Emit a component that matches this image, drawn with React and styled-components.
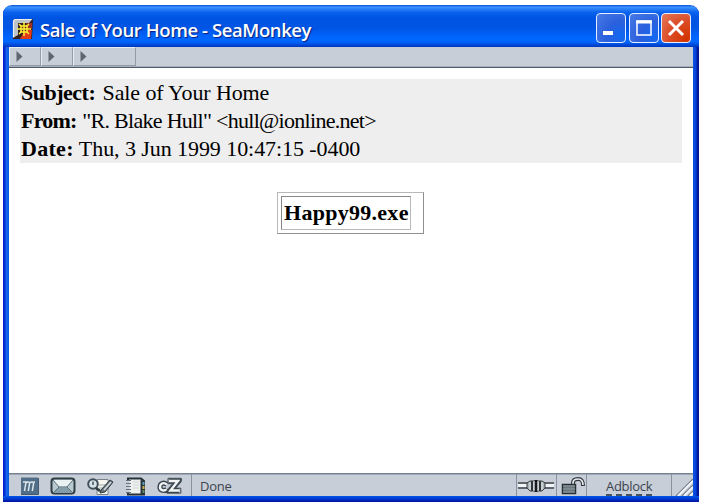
import React from "react";
import styled, { createGlobalStyle } from "styled-components";

const GlobalStyle = createGlobalStyle`
  * { box-sizing: border-box; }
  body { margin: 0; background: #fff; overflow: hidden; }
`;

const Desktop = styled.main`
  width: 704px;
  height: 504px;
  padding: 5px 5px 2px 3px;
  background: #fff;
`;

const Window = styled.section`
  display: flex;
  flex-direction: column;
  width: 696px;
  height: 497px;
  padding: 0 6px 6px;
  border-radius: 9px 9px 0 0;
  overflow: hidden;
  background:
    linear-gradient(to bottom, #0054e8 0, #0038d0 50%, #00109c 100%) bottom / 100% 6px no-repeat,
    linear-gradient(to right, #0019cf 0, #0831d9 33%, #166aee 60%, #0855dd 100%) left / 6px 100% no-repeat,
    linear-gradient(to right, #0855dd 0, #0441d8 50%, #001ba0 70%, #00138c 100%) right / 6px 100% no-repeat;
`;

const TitleBar = styled.header`
  flex: none;
  display: flex;
  align-items: center;
  height: 42px;
  margin: 0 -6px;
  padding: 5px 8px 0 9px;
  background: linear-gradient(to bottom, #0b4fd0 0, #3c94ff 5%, #2b82f8 9%, #0962ee 18%, #0054e3 30%, #0055e5 55%, #0066ff 78%, #0065fc 88%, #0045d0 96%, #0035bb 100%);
`;

const Title = styled.h1`
  flex: 1;
  margin: 3px 0 0 6px;
  color: #fff;
  font: 600 18.5px/26px "Open Sans", sans-serif;
  letter-spacing: -0.41px;
  text-shadow: 1px 1px 1px #0b1f80;
  white-space: nowrap;
`;

const WindowButtons = styled.div`
  display: flex;
  gap: 2.5px;
  margin-bottom: 1px;
`;

const WindowButton = styled.button`
  display: grid;
  place-items: center;
  width: 30px;
  height: 30px;
  padding: 0;
  border: 1.5px solid #e6eeff;
  border-radius: 4px;
  background: ${(p) =>
    p.$close
      ? "radial-gradient(circle at 90% 90%, #d33400 0, #dc4b25 50%, #e57b5d 100%)"
      : "radial-gradient(circle at 85% 80%, #1268f2 0, #2b60dc 45%, #4a7be7 100%)"};
`;

const Toolbar = styled.nav`
  flex: none;
  display: flex;
  height: 21px;
  background: #c7ced8;
  border-bottom: 1px solid #4d5b6b;
  box-shadow: inset 0 -1px #a7afbb;
`;

const Grip = styled.button`
  display: flex;
  align-items: center;
  width: ${(p) => p.$width}px;
  height: 19px;
  padding: 0 0 1px 6px;
  border: solid;
  border-width: 1px;
  border-color: #e8edf3 #929ca9 #929ca9 #e8edf3;
  background: #c7ced8;
`;

const Content = styled.article`
  flex: 1;
  min-height: 0;
  padding: 11px 11px 0;
  background: #fff;
  color: #000;
  font-family: "Liberation Serif", serif;
`;

const Headers = styled.div`
  height: 84px;
  padding-left: 1px;
  background: #eee;
  font-size: 22px;
  line-height: 28px;
`;

const HeaderLine = styled.div`
  height: 28px;
  white-space: nowrap;
  letter-spacing: ${(p) => p.$spacing}px;
`;

const Label = styled.b`
  margin-right: ${(p) => p.$gap || 0}px;
  letter-spacing: ${(p) => p.$spacing}px;
`;

const Attachment = styled.div`
  width: 147px;
  height: 42px;
  margin: 29px 0 0 257px;
  padding: 3px;
  border: 1px solid;
  border-color: #b8b8b8 #909090 #909090 #b8b8b8;
`;

const AttachmentName = styled.div`
  width: 130px;
  height: 34px;
  padding-left: 2px;
  border: 1px solid;
  border-color: #888 #b8b8b8 #b8b8b8 #888;
  font-size: 22px;
  font-weight: bold;
  line-height: 31px;
  letter-spacing: 0.28px;
  white-space: nowrap;
`;

const StatusBar = styled.footer`
  flex: none;
  display: flex;
  height: 23px;
  background: #c7ced8;
  border-top: 1px solid #77818f;
  box-shadow: inset 0 1px #9ea7b4;
  color: #3c444e;
  font: 13px/25px "Open Sans", sans-serif;
`;

const StatusCell = styled.div`
  flex: ${(p) => (p.$width ? "none" : "1")};
  display: flex;
  align-items: center;
  width: ${(p) => (p.$width ? p.$width + "px" : "auto")};
  padding: 2px 0 0 ${(p) => p.$pad || 0}px;
  gap: ${(p) => p.$gap || 0}px;
  border-right: ${(p) => (p.$last ? "0" : "1px solid #8993a0")};
`;

const StatusText = styled.span`
  letter-spacing: -0.25px;
`;

const Adblock = styled.span`
  height: 20px;
  line-height: 20px;
  letter-spacing: -0.3px;
  border-bottom: 2px dashed #465260;
`;

const Svg = styled.svg`
  display: block;
  flex: none;
`;

const AppIcon = () => (
  <Svg width="22" height="22" viewBox="0 0 22 22">
    <path d="M2 3Q2 1 4 1H21L20 21H1Z" fill="#34201d" />
    <path d="M13 12H20L19 21H8Z" fill="#df3c17" />
    <path d="M14 5H20V11H15Z" fill="#9d3023" />
    <path d="M1 20V4Q1 1 4 1H20.5L17 5H6V17Z" fill="#bcc3c9" />
    <path d="M1.5 19V4Q1.5 1.5 4 1.5H19.5" fill="none" stroke="#f0efe9" strokeWidth="1.2" />
    <g fill="none" stroke="#ffee35" strokeWidth="1.5">
      <path d="M12 4V18M5 11H19M7 6L17 16M17 6L7 16" />
      <path d="M9 8H15V14H9Z" fill="#6b2c18" />
      <path d="M9 11H15M12 8V14" />
    </g>
  </Svg>
);

const Arrow = () => (
  <Svg width="7" height="11"><path d="M.5 0V11L6.5 5.5Z" fill="#5d6671" /></Svg>
);

const MinimizeIcon = () => <Svg width="26" height="26"><rect x="5" y="16" width="10" height="4" fill="#fff" /></Svg>;
const MaximizeIcon = () => (
  <Svg width="26" height="26"><path d="M6 6H20V20H6Z" fill="none" stroke="#fff" strokeWidth="1.5" /><path d="M5.3 7H20.7" stroke="#fff" strokeWidth="3" /></Svg>
);
const CloseIcon = () => (
  <Svg width="26" height="26"><path d="M6 6L20 20M20 6L6 20" stroke="#fff" strokeWidth="3" /></Svg>
);

const NavigatorIcon = () => (
  <Svg width="19" height="18">
    <rect x="1" y=".5" width="17" height="17" fill="#526f87" />
    <path d="M3 5H6L4.5 14M6 6C7 4.5 9.8 4.5 9.5 6.8L8.3 14M9.6 6C11 4.5 14 4.5 13.5 6.8L12.3 14M13.7 5H15" fill="none" stroke="#dce7ed" strokeWidth="1.5" />
    <path d="M1 17.5H18.5V1" fill="none" stroke="#405b72" />
  </Svg>
);

const MailIcon = () => (
  <Svg width="26" height="18">
    <rect x="1.5" y="1.5" width="23" height="15" rx="3" fill="#b9c9d0" stroke="#303d44" strokeWidth="2" />
    <path d="M3 16L9 10.5H17L23 16Z" fill="#849da8" />
    <path d="M3.5 3H22.5L17 9.5H9Z" fill="#eaf1f3" />
    <path d="M3 3L9 10H17L23 3M9 10L3 16M17 10L23 16" fill="none" stroke="#60747e" />
  </Svg>
);

const ComposerIcon = () => (
  <Svg width="27" height="19">
    <path d="M10 2.5H21V17.5H10Z" fill="#f4f5ef" stroke="#7a8289" />
    <path d="M12 8H19M12 11H18M12 14H19" stroke="#9ba5aa" />
    <path d="M14 13L23 3L26 5L18 15L13 16Z" fill="#65737a" stroke="#303a40" />
    <path d="M17 13L24 5" stroke="#d9e0e2" strokeWidth="1.5" />
    <circle cx="6" cy="7" r="4.8" fill="#d8e2e7" stroke="#40505a" strokeWidth="2" />
    <path d="M5 4.5H7V8H5Z" fill="#667985" />
    <path d="M9 11L13 14" stroke="#303b42" strokeWidth="2.8" />
  </Svg>
);

const AddressBookIcon = () => (
  <Svg width="21" height="19">
    <path d="M3 1.5H16L19 4V17.5H3Z" fill="#edf0ed" stroke="#273139" strokeWidth="2" />
    <path d="M15.5 2.5L18 4V17H15.5Z" fill="#28343b" />
    <path d="M18.5 5V8" stroke="#619fbd" strokeWidth="2" />
    <path d="M18.5 9V12" stroke="#d4b348" strokeWidth="2" />
    <path d="M18.5 13V16" stroke="#618b65" strokeWidth="2" />
    <path d="M3 3V16" stroke="#c7ced8" strokeWidth="3" />
    <path d="M1 3.5H6M1 6.5H6M1 9.5H6M1 12.5H6M1 15.5H6" stroke="#64727c" />
    <path d="M8 5H14M8 8H14M8 11H14" stroke="#d0d8d9" />
  </Svg>
);

const ChatZillaIcon = () => (
  <Svg width="25" height="18">
    <g fill="none" stroke="#3b464e" strokeWidth="5.2" strokeLinejoin="miter"><path d="M10 7.5C6 4.5 3 7 3 10C3 13 6 14.5 10 12.5M12 4H21L13.5 13.5H22" /></g>
    <g fill="none" stroke="#f2f5f4" strokeWidth="2.4"><path d="M10 7.5C6 4.5 3 7 3 10C3 13 6 14.5 10 12.5M12 4H21L13.5 13.5H22" /></g>
    <path d="M11 1.3H24V5L18.5 11.2H23.8V16.2H10V13L15.7 6.7H11Z" fill="none" stroke="#3b464e" strokeWidth="1" />
  </Svg>
);

const PlugIcon = () => (
  <Svg width="38" height="17">
    <path d="M1 5H11M1 10H11M27 5H37M27 10H37" stroke="#3c4348" strokeWidth="1.5" />
    <path d="M1 7.5H11M27 7.5H37" stroke="#f1f4f6" strokeWidth="3" />
    <path d="M10 5L13 3H25L28 5V10L25 13H13L10 10Z" fill="#aab2b5" stroke="#343c41" />
    <path d="M15 3V13M23 3V13" stroke="#303539" strokeWidth="2" />
    <path d="M19 2V14" stroke="#16191b" strokeWidth="3" />
    <path d="M13 4V12M17 3V13M21 3V13M25 4V12" stroke="#e5eaed" />
  </Svg>
);

const LockIcon = () => (
  <Svg width="25" height="18">
    <path d="M12 8V6C12 3 14 2 17 2C21 2 22 4 22 9" fill="none" stroke="#323a40" strokeWidth="4" />
    <path d="M12 7V6C12 3 14 2 17 2C21 2 22 4 22 8" fill="none" stroke="#e6ebed" strokeWidth="1.7" />
    <rect x="1.5" y="7.5" width="13" height="9" fill="#69757c" stroke="#293137" strokeWidth="1.5" />
    <path d="M2 9H14M2 12H14M2 15H14" stroke="#929da2" />
  </Svg>
);

const ResizeGrip = () => (
  <Svg width="21" height="20">
    <path d="M4 20L21 3M10 20L21 9M16 20L21 15" stroke="#77818e" strokeWidth="1.4" />
    <path d="M6 20L21 5M12 20L21 11M18 20L21 17" stroke="#f3f6fa" strokeWidth="1.8" />
  </Svg>
);

export default function App() {
  return (
    <Desktop>
      <GlobalStyle />
      <Window>
        <TitleBar>
          <AppIcon />
          <Title>Sale of Your Home - SeaMonkey</Title>
          <WindowButtons>
            <WindowButton aria-label="Minimize"><MinimizeIcon /></WindowButton>
            <WindowButton aria-label="Maximize"><MaximizeIcon /></WindowButton>
            <WindowButton $close aria-label="Close"><CloseIcon /></WindowButton>
          </WindowButtons>
        </TitleBar>
        <Toolbar>
          <Grip $width={32}><Arrow /></Grip>
          <Grip $width={32}><Arrow /></Grip>
          <Grip $width={63}><Arrow /></Grip>
        </Toolbar>
        <Content>
          <Headers>
            <HeaderLine $spacing={-0.12}><Label $spacing={-0.5} $gap={2}>Subject:</Label> Sale of Your Home</HeaderLine>
            <HeaderLine $spacing={-0.71}><Label $spacing={-0.8} $gap={1}>From:</Label> "R. Blake Hull" &lt;hull@ionline.net&gt;</HeaderLine>
            <HeaderLine $spacing={-0.07}><Label $spacing={0.3}>Date:</Label> Thu, 3 Jun 1999 10:47:15 -0400</HeaderLine>
          </Headers>
          <Attachment><AttachmentName>Happy99.exe</AttachmentName></Attachment>
        </Content>
        <StatusBar>
          <StatusCell $width={183} $pad={11} $gap={11}>
            <NavigatorIcon /><MailIcon /><ComposerIcon /><AddressBookIcon /><ChatZillaIcon />
          </StatusCell>
          <StatusCell $pad={8}><StatusText>Done</StatusText></StatusCell>
          <StatusCell $width={40}><PlugIcon /></StatusCell>
          <StatusCell $width={30} $pad={4}><LockIcon /></StatusCell>
          <StatusCell $width={85} $pad={19}><Adblock>Adblock</Adblock></StatusCell>
          <StatusCell $width={21} $last><ResizeGrip /></StatusCell>
        </StatusBar>
      </Window>
    </Desktop>
  );
}
